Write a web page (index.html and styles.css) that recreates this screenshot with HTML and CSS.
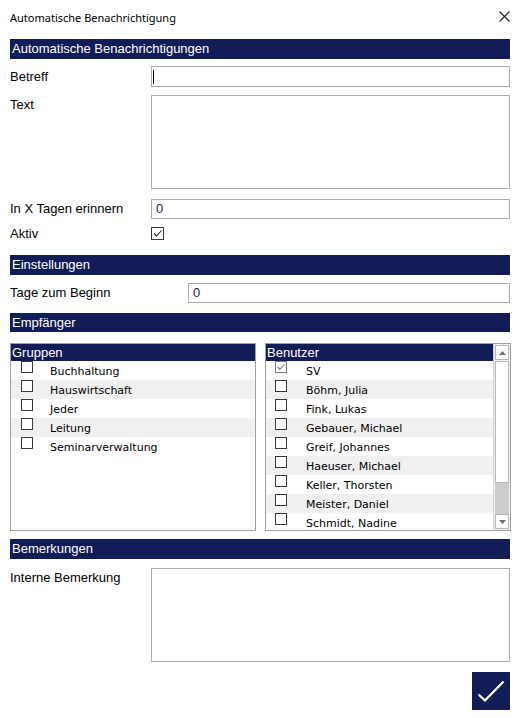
FILE: index.html
```html
<!DOCTYPE html>
<html lang="de">
<head>
<meta charset="utf-8">
<title>Automatische Benachrichtigung</title>
<link rel="stylesheet" href="styles.css">
</head>
<body>
<div class="dialog">
  <div class="titlebar">
    <span class="title">Automatische Benachrichtigung</span>
    <svg class="close" width="11" height="11" viewBox="0 0 11 11"><path d="M0.5 0.5 L10.5 10.5 M10.5 0.5 L0.5 10.5" stroke="#222" stroke-width="1.1" fill="none"/></svg>
  </div>

  <div class="bar bar-first">Automatische Benachrichtigungen</div>
  <div class="row row-betreff">
    <div class="label">Betreff</div>
    <div class="field field-21"><span class="caret"></span></div>
  </div>
  <div class="row row-text">
    <div class="label label-top">Text</div>
    <div class="field area"></div>
  </div>
  <div class="row row-tage">
    <div class="label">In X Tagen erinnern</div>
    <div class="field field-20"><span class="val">0</span></div>
  </div>
  <div class="row row-aktiv">
    <div class="label">Aktiv</div>
    <span class="cb cb-aktiv"><svg width="11" height="11" viewBox="0 0 11 11"><path d="M2 5.5 L4.5 8 L9.5 2.5" stroke="#222" stroke-width="1.1" fill="none"/></svg></span>
  </div>

  <div class="bar bar-einst">Einstellungen</div>
  <div class="row row-beginn">
    <div class="label label-wide">Tage zum Beginn</div>
    <div class="field field-20"><span class="val">0</span></div>
  </div>

  <div class="bar bar-empf">Empfänger</div>
  <div class="lists">
    <div class="listbox">
      <div class="list-main">
        <div class="list-head">Gruppen</div>
        <div class="item"><span class="cb"></span><span class="item-text">Buchhaltung</span></div>
        <div class="item alt"><span class="cb"></span><span class="item-text">Hauswirtschaft</span></div>
        <div class="item"><span class="cb"></span><span class="item-text">Jeder</span></div>
        <div class="item alt"><span class="cb"></span><span class="item-text">Leitung</span></div>
        <div class="item"><span class="cb"></span><span class="item-text">Seminarverwaltung</span></div>
      </div>
    </div>
    <div class="listbox listbox-users">
      <div class="list-main">
        <div class="list-head">Benutzer</div>
        <div class="item"><span class="cb cb-dis"><svg width="10" height="10" viewBox="0 0 10 10"><path d="M1.5 5 L4 7.5 L8.5 2" stroke="#7a7a7a" stroke-width="1.1" fill="none"/></svg></span><span class="item-text">SV</span></div>
        <div class="item alt"><span class="cb"></span><span class="item-text">Böhm, Julia</span></div>
        <div class="item"><span class="cb"></span><span class="item-text">Fink, Lukas</span></div>
        <div class="item alt"><span class="cb"></span><span class="item-text">Gebauer, Michael</span></div>
        <div class="item"><span class="cb"></span><span class="item-text">Greif, Johannes</span></div>
        <div class="item alt"><span class="cb"></span><span class="item-text">Haeuser, Michael</span></div>
        <div class="item"><span class="cb"></span><span class="item-text">Keller, Thorsten</span></div>
        <div class="item alt"><span class="cb"></span><span class="item-text">Meister, Daniel</span></div>
        <div class="item"><span class="cb"></span><span class="item-text">Schmidt, Nadine</span></div>
      </div>
      <div class="scrollbar">
        <div class="sb-btn"><svg width="7" height="4" viewBox="0 0 7 4"><path d="M0 4 L3.5 0 L7 4 Z" fill="#707070"/></svg></div>
        <div class="sb-thumb"></div>
        <div class="sb-track"></div>
        <div class="sb-btn"><svg width="7" height="4" viewBox="0 0 7 4"><path d="M0 0 L3.5 4 L7 0 Z" fill="#707070"/></svg></div>
      </div>
    </div>
  </div>

  <div class="bar bar-bem">Bemerkungen</div>
  <div class="row row-bem">
    <div class="label label-top">Interne Bemerkung</div>
    <div class="field area"></div>
  </div>

  <div class="actions">
    <button class="ok" type="button" aria-label="OK"><svg width="38" height="38" viewBox="0 0 38 38"><path d="M6.5 22.5 L13 28.5 L31.5 9.5" stroke="#fff" stroke-width="2.2" fill="none"/></svg></button>
  </div>
</div>
</body>
</html>
```

FILE: styles.css
```css
* { box-sizing: border-box; }
html, body { margin: 0; padding: 0; background: #fff; }
body { font-family: "Liberation Sans", Arial, sans-serif; font-size: 13px; color: #000; }

.dialog { width: 520px; padding: 0 10px; }

.titlebar { height: 33px; display: flex; align-items: center; justify-content: space-between; }
.title { font-family: "Noto Sans", "Liberation Sans", sans-serif; font-size: 11px; color: #000; padding-top: 1px; }
.close { display: block; margin-top: -1px; }

.bar { background: #121c56; color: #fff; height: 20px; line-height: 20px; padding-left: 2px; font-size: 13px; white-space: nowrap; }
.bar-first { margin-top: 6px; }
.bar-einst { margin-top: 15px; }
.bar-empf { margin-top: 10px; height: 19px; line-height: 19px; }
.bar-bem { margin-top: 8px; }

.row { display: flex; align-items: center; }
.row-betreff { margin-top: 7px; }
.row-text { margin-top: 8px; align-items: flex-start; }
.row-tage { margin-top: 10px; }
.row-aktiv { margin-top: 8px; height: 13px; }
.row-beginn { margin-top: 8px; }
.row-bem { margin-top: 9px; align-items: flex-start; }

.label { width: 141px; flex: none; line-height: 16px; }
.label-top { line-height: 17px; padding-top: 1px; }
.label-wide { width: 178px; }

.field { flex: 1; border: 1px solid #ababab; background: #fff; position: relative; }
.field-21 { height: 21px; }
.field-20 { height: 20px; display: flex; align-items: center; padding-left: 4px; }
.area { height: 94px; }
.val { color: #1a2460; font-size: 13px; line-height: 16px; }
.caret { position: absolute; left: 1px; top: 3px; width: 1px; height: 14px; background: #000; }

.cb { width: 12px; height: 12px; border: 1px solid #3a3a3a; background: #fff; display: inline-flex; align-items: center; justify-content: center; flex: none; }
.cb-aktiv { width: 13px; height: 13px; margin-left: 0; }
.cb-dis { border-color: #7a7a7a; }
.cb svg { display: block; }

.lists { margin-top: 11px; display: grid; grid-template-columns: 246px 246px; column-gap: 9px; }
.listbox { height: 188px; border: 1px solid #a0a0a0; display: flex; overflow: hidden; background: #fff; }
.list-main { flex: 1; min-width: 0; overflow: hidden; }
.list-head { background: #121c56; color: #fff; height: 17px; line-height: 17px; padding-left: 1px; font-size: 13px; }
.item { height: 19px; display: flex; align-items: flex-start; padding-left: 10px; }
.item.alt { background: #f0f0f0; }
.item .cb { margin-top: 0; }
.item-text { font-family: "DejaVu Sans", Verdana, sans-serif; font-size: 11px; line-height: 19px; margin-left: 17px; margin-top: 1px; }
.listbox-users .item { padding-left: 9px; }
.listbox-users .item-text { margin-left: 19px; }

.scrollbar { width: 17px; flex: none; display: flex; flex-direction: column; padding: 1px; background: #f0f0f0; border-left: 1px solid #d0d0d0; }
.sb-btn { height: 15px; border: 1px solid #b8b8b8; background: #fff; display: flex; align-items: center; justify-content: center; flex: none; }
.sb-thumb { height: 122px; border: 1px solid #b8b8b8; background: #fff; flex: none; margin-top: 1px; }
.sb-track { flex: 1; background: #cdcdcd; }

.actions { display: flex; justify-content: flex-end; margin-top: 10px; }
.ok { width: 38px; height: 38px; padding: 0; border: none; background: #121c56; display: block; cursor: pointer; }
.ok svg { display: block; }
```
